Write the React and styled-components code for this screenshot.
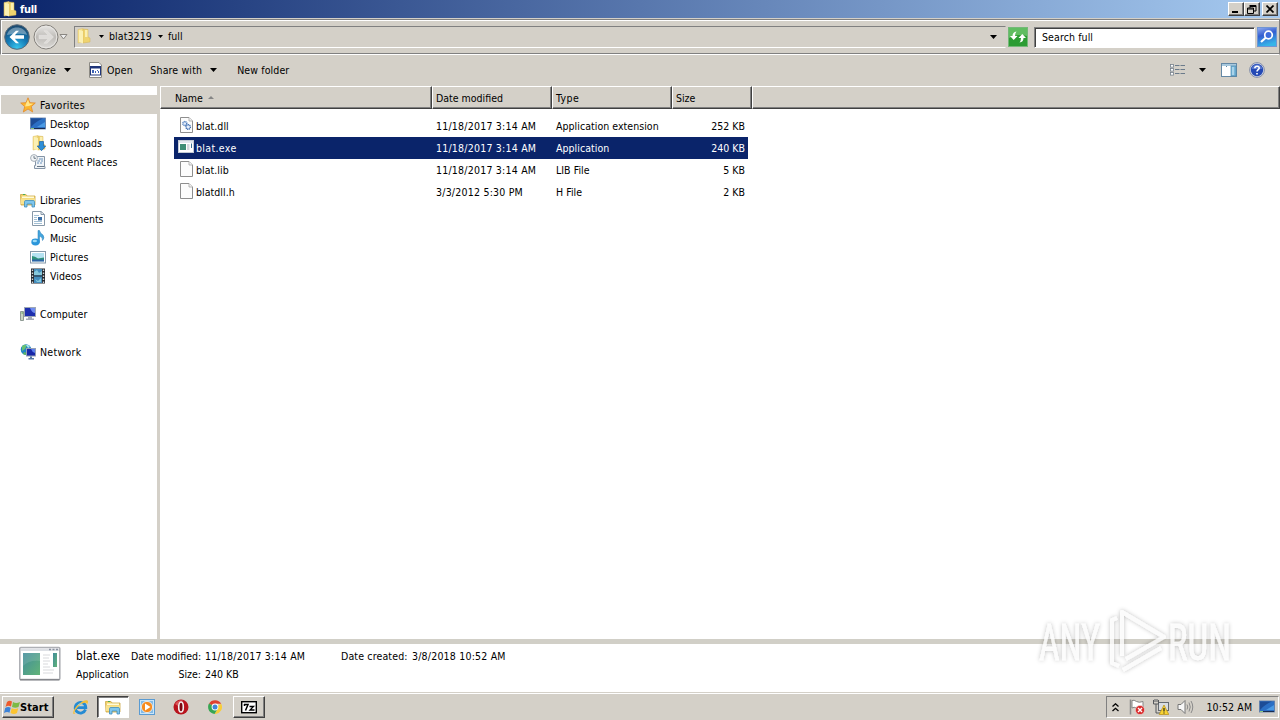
import React from "react";
import styled, { createGlobalStyle, css } from "styled-components";

const face = "#d4d0c8";
const navy = "#0a246a";

const Global = createGlobalStyle`
  * { box-sizing: border-box; }
  html, body { margin: 0; padding: 0; overflow: hidden; background: ${face}; }
  body { font-family: "DejaVu Sans Condensed", "DejaVu Sans", sans-serif; font-stretch: semi-condensed; font-size: 10.5px; color: #000; }
  svg { display: block; flex: none; }
`;

const Screen = styled.div`
  width: 1280px;
  height: 720px;
  display: flex;
  flex-direction: column;
  background: ${face};
  position: relative;
  overflow: hidden;
`;

const Label = styled.span`
  white-space: nowrap;
  line-height: 14px;
  letter-spacing: ${(p) => p.$track || 0}px;
  font-size: ${(p) => p.$size || 10.5}px;
`;

const raised = css`
  border: 1px solid;
  border-color: #fff #404040 #404040 #fff;
  box-shadow: inset -1px -1px 0 #808080;
  background: ${face};
`;

/* Title bar */
const TitleBar = styled.header`
  height: 18px;
  display: flex;
  align-items: center;
  padding: 0 2px 0 1px;
  background: linear-gradient(90deg, ${navy}, #a6caf0);
  color: #fff;
`;
const TitleText = styled.span`
  flex: 1;
  margin-left: 3px;
  padding-top: 1px;
  font-weight: bold;
  font-size: 11px;
  letter-spacing: -0.3px;
`;
const CaptionButtons = styled.div`
  display: flex;
`;
const CaptionButton = styled.div`
  ${raised}
  width: 16px;
  height: 14px;
  margin-left: ${(p) => p.$gap || 0}px;
  display: flex;
  align-items: center;
  justify-content: center;
`;

/* Address row */
const AddressRow = styled.div`
  height: 36px;
  margin-top: 1px;
  display: flex;
  align-items: center;
  padding: 0 2px 0 3px;
  border-top: 1px solid #808080;
  border-bottom: 1px solid #fff;
  border-left: 1px solid #808080;
  border-right: 1px solid #808080;
  box-shadow: inset 1px 1px 0 #fff, inset 0 -1px 0 #808080;
`;
const Sunken = styled.div`
  height: ${(p) => p.$h}px;
  border: 1px solid;
  border-color: #808080 #fff #fff #808080;
  display: flex;
  align-items: center;
`;
const AddressBox = styled(Sunken)`
  flex: 1;
  margin-left: 6px;
  padding-right: 8px;
  border-right-color: ${face};
`;
const Crumbs = styled.div`
  flex: 1;
  display: flex;
  align-items: center;
  padding-bottom: 1px;
`;
const FolderSlot = styled.div`
  margin: -2px 8px 0 0;
`;
const Crumb = styled(Label)`
  margin: 0 6px 0 5px;
  padding-bottom: 1px;
`;
const Refresh = styled.div`
  margin: 0 6px 0 2px;
`;
const SearchBox = styled(Sunken)`
  width: 221px;
  margin-right: 2px;
  background: #fff;
  padding-left: 7px;
  box-shadow: inset 1px 1px 0 #404040;
`;

/* Command bar */
const CommandBar = styled.div`
  height: 31px;
  display: flex;
  align-items: center;
  padding: 0 15px 1px 12px;
`;
const Command = styled.div`
  display: flex;
  align-items: center;
  gap: ${(p) => p.$gap || 0}px;
  margin-right: ${(p) => p.$after || 0}px;
`;
const Spacer = styled.div`
  flex: 1;
`;

/* Body */
const Body = styled.main`
  height: 553px;
  display: flex;
`;
const Nav = styled.nav`
  width: 157px;
  background: #fff;
  padding-top: 9px;
`;
const NavRow = styled.div`
  height: 19px;
  margin: 0 0 ${(p) => (p.$gapAfter ? 19 : 0)}px 1px;
  padding-left: ${(p) => (p.$child ? 29 : 19)}px;
  display: flex;
  align-items: center;
  gap: 4px;
  background: ${(p) => (p.$active ? face : "transparent")};

  ${Label} {
    padding-top: 1px;
  }
`;
const Splitter = styled.div`
  width: 3px;
  background: ${face};
`;
const Content = styled.section`
  flex: 1;
  background: #fff;
`;
const HeaderRow = styled.div`
  display: grid;
  grid-template-columns: 272px 120px 120px 80px 1fr;
  height: 23px;
`;
const HeaderCell = styled.div`
  background: ${face};
  border-top: 1px solid #fff;
  border-left: 1px solid #fff;
  border-right: 1px solid #404040;
  border-bottom: 1px solid #404040;
  box-shadow: inset -1px -1px 0 #808080;
  padding: 1px 0 0 ${(p) => (p.$first ? 14 : 3)}px;
  display: flex;
  align-items: center;
  gap: 5px;
`;
const FileList = styled.div`
  padding: 6px 0 0 14px;
`;
const FileRow = styled.div`
  width: 574px;
  height: 22px;
  display: grid;
  grid-template-columns: 262px 120px 120px 1fr;
  align-items: center;
  background: ${(p) => (p.$selected ? navy : "transparent")};
  color: ${(p) => (p.$selected ? "#fff" : "#000")};
`;
const NameCell = styled.div`
  display: flex;
  align-items: center;
  gap: 2px;
  padding-left: 4px;

  svg {
    margin-top: -2px;
  }
`;
const SizeCell = styled.div`
  text-align: right;
  padding-right: 3px;
  line-height: 14px;
`;

/* Details pane */
const Details = styled.section`
  height: 53px;
  border-top: 5px solid #d1cfc7;
  background: #fff;
  display: flex;
  padding: 1px 0 0 18px;
`;
const DetailsText = styled.div`
  display: grid;
  grid-template-columns: 55px 70px 4px 136px 71px auto;
  grid-template-rows: 18px 18px;
  align-items: center;
  align-content: start;
  margin: 2px 0 0 15px;
`;
const Right = styled(Label)`
  text-align: right;
  grid-column: ${(p) => p.$col};
`;
const At = styled(Label)`
  grid-column: ${(p) => p.$col};
`;

/* Taskbar */
const Taskbar = styled.footer`
  height: 28px;
  border-top: 1px solid #d4d0c8;
  box-shadow: inset 0 1px 0 #fff;
  display: flex;
  align-items: flex-start;
  padding: 3px 1px 0 2px;
`;
const StartButton = styled.div`
  ${raised}
  width: 52px;
  height: 22px;
  display: flex;
  align-items: center;
  padding-left: 1px;
  font-weight: bold;
  font-size: 11px;
  letter-spacing: 0.1px;

  svg {
    margin-right: -1px;
  }
`;
const TaskSlot = styled.div`
  width: ${(p) => p.$w || 34}px;
  height: 22px;
  display: flex;
  align-items: center;
  justify-content: center;
  ${(p) => p.$state === "raised" && raised}
  ${(p) =>
    p.$state === "pressed" &&
    css`
      background: #fff;
      border: 1px solid;
      border-color: #404040 #fff #fff #404040;
      box-shadow: inset 1px 1px 0 #808080;
    `}
`;
const Tray = styled.div`
  width: 173px;
  height: 22px;
  border: 1px solid;
  border-color: #808080 #fff #fff #808080;
  display: flex;
  align-items: center;
  padding-left: 5px;
`;
const TrayItem = styled.div`
  margin-right: ${(p) => p.$after || 0}px;
  display: flex;
`;
const Watermark = styled.div`
  position: absolute;
  left: 1020px;
  top: 592px;
`;

const Svg = ({ w = 16, h = w, vb, children }) => (
  <svg width={w} height={h} viewBox={vb || `0 0 ${w} ${h}`}>{children}</svg>
);

const Down = ({ small }) => (
  <Svg w={small ? 5 : 7} h={small ? 3 : 4}>
    <path d={small ? "M0 0H5L2.5 3Z" : "M0 0H7L3.5 4Z"} fill="#000" />
  </Svg>
);

const Folder = () => (
  <Svg>
    <path d="M3 1.500L8 .5V14L3 15Z" fill="#f7e28f" stroke="#dcbd62" strokeWidth=".5" />
    <path d="M8 1L13 1.500V9L15 10V14L8 15Z" fill="#efd36f" stroke="#d5b455" strokeWidth=".5" />
    <path d="M4 2L8 3V15.500L4 14Z" fill="#fbf0b4" />
    <path d="M10 2H12.500V9H10Z" fill="#fbefb0" />
  </Svg>
);

const Back = () => (
  <Svg w={26}>
    <defs>
      <radialGradient id="bk" cx=".5" cy=".95" r=".9">
        <stop offset="0" stopColor="#39c6ee" />
        <stop offset=".5" stopColor="#1479b5" />
        <stop offset="1" stopColor="#1c4a70" />
      </radialGradient>
    </defs>
    <circle cx="13" cy="13" r="12.300" fill="url(#bk)" stroke="#5c6b78" />
    <path d="M3 11C5 1 21 1 23 11C17 9 9 10 3 11Z" fill="#fff" opacity=".35" />
    <path d="M5.500 13L12 6.800H15L10.800 11.300H20V14.700H10.800L15 19.200H12Z" fill="#fff" />
  </Svg>
);
const Forward = () => (
  <Svg w={26}>
    <defs>
      <linearGradient id="fw" x1="0" y1="0" x2="0" y2="1">
        <stop offset="0" stopColor="#e9e8e6" />
        <stop offset=".5" stopColor="#bfbcb8" />
        <stop offset="1" stopColor="#dddbd8" />
      </linearGradient>
    </defs>
    <circle cx="13" cy="13" r="12" fill="url(#fw)" stroke="#85827d" />
    <circle cx="13" cy="13" r="10.800" fill="none" stroke="#e8e6e3" />
    <path d="M20.500 13L14 6.800H11L15.200 11.300H6V14.700H15.200L11 19.200H14Z" fill="#dedcd9" stroke="#eae8e6" strokeWidth=".5" />
  </Svg>
);
const RefreshIcon = () => (
  <Svg w={20}>
    <rect x=".5" y=".5" width="19" height="19" fill="#2c9c33" stroke="#74b878" />
    <path d="M1 1H19V9Q10 6 1 11Z" fill="#7dd07b" opacity=".65" />
    <path d="M2 9H4.500Q4.500 5 8.500 4.500Q7 6 7 9H9.500L5.700 13Z" fill="#fff" />
    <path d="M18 11H15.500Q15.500 15 11.500 15.500Q13 14 13 11H10.500L14.300 7Z" fill="#fff" />
  </Svg>
);
const SearchIcon = () => (
  <Svg w={20}>
    <defs>
      <linearGradient id="se" x1="0" y1="0" x2=".3" y2="1">
        <stop offset="0" stopColor="#94aff0" />
        <stop offset=".45" stopColor="#345ed1" />
        <stop offset="1" stopColor="#36b4e8" />
      </linearGradient>
    </defs>
    <rect x=".5" y=".5" width="19" height="19" fill="url(#se)" stroke="#7195d2" />
    <path d="M4 15L9 10.500" stroke="#fff" strokeWidth="2.200" />
    <circle cx="11.500" cy="8" r="3.800" fill="#3d6bdc" stroke="#fff" strokeWidth="1.700" />
  </Svg>
);
const OpenIcon = () => (
  <Svg w={15} h={16}>
    <path d="M1.500 .5H11L13.500 3V15.500H1.500Z" fill="#fff" stroke="#8c8a84" />
    <rect x="2.500" y="4.500" width="10" height="8.500" fill="#fff" stroke="#20367a" />
    <path d="M2 4H13V6.500H2Z" fill="#20367a" />
    <path d="M4 8H6V11H4ZM7 9H8V11H7ZM9 8H10V9H9ZM10 9H11V11H10Z" fill="#3d62b5" />
  </Svg>
);
const ViewIcon = () => (
  <Svg w={16} h={12}>
    {[0, 4, 8].map((y) => (
      <g key={y}>
        <rect x=".5" y={y + 0.5} width="3" height="2.600" fill="#fff" stroke="#77818c" strokeWidth=".8" />
        <path d={`M5 ${y + 1.5}H9.500M10.500 ${y + 1.5}H15`} stroke="#6b7b8b" />
      </g>
    ))}
  </Svg>
);
const PaneIcon = () => (
  <Svg w={16} h={14}>
    <rect x=".5" y=".5" width="15" height="13" fill="#fff" stroke="#6488a5" />
    <path d="M1 1H15V3H1Z" fill="#a8c9de" />
    <path d="M5.500 3V4" stroke="#6488a5" />
    <rect x="10" y="3" width="5" height="10" fill="#78b7da" stroke="#4986ac" strokeWidth=".7" />
    <path d="M12 4V12" stroke="#dcf0fa" />
  </Svg>
);
const HelpIcon = () => (
  <Svg>
    <circle cx="8" cy="8" r="7.400" fill="#d6dbe8" stroke="#858fa9" />
    <circle cx="8" cy="8" r="6.200" fill="#2449b5" />
    <path d="M2.500 7C4 1 12 1 13.500 7Z" fill="#7a96df" opacity=".6" />
    <path d="M5.800 6.200C6 3.500 10.300 3.600 10.200 6.100C10.100 7.700 8 7.700 8 9.500M8 11V12.500" fill="none" stroke="#fff" strokeWidth="1.600" />
  </Svg>
);
const Star = () => (
  <Svg>
    <path d="M8 .8L10 5.700L15.300 6L11.300 9.600L12.700 15L8 12L3.300 15L4.700 9.600L.7 6L6 5.700Z" fill="#fcb52e" stroke="#e28a2c" strokeWidth=".8" />
    <path d="M8 2.500L9.300 6.500L13.500 6.800L9 9L5 9.500L6 6.700Z" fill="#ffe68c" />
  </Svg>
);
const Desktop = () => (
  <Svg>
    <rect x=".5" y="2" width="15" height="11" fill="#2b6fc4" stroke="#5d7ba7" strokeWidth=".8" />
    <path d="M1 2.500H13Q6 5 1 11Z" fill="#1d4c96" />
    <path d="M7 11L15 6V11Z" fill="#4b9ae4" />
    <path d="M1 12.500H15" stroke="#1a2c50" />
    <path d="M1 12.500H4" stroke="#8cc97e" />
  </Svg>
);
const Downloads = () => (
  <Svg>
    <Folder />
    <path d="M9.500 6.500H13.500V11H15.700L11.500 15.700L7.200 11H9.500Z" fill="#2d8fd8" stroke="#1c62a4" strokeWidth=".7" />
  </Svg>
);
const Recent = () => (
  <Svg>
    <path d="M5.500 2.500H14.500V12.500H15V14.500H4.500V11.500H5.500Z" fill="#eef2f6" stroke="#8494a6" />
    <path d="M9 5H13M7.500 7H10M11 7H13M7 9H9M10 9H12" stroke="#6d94bd" />
    <path d="M7 12.500H14.500" stroke="#687888" />
    <circle cx="4" cy="4" r="3.400" fill="#f2f5f7" stroke="#a4adb6" />
    <path d="M4 2V4.300H6" stroke="#52616e" fill="none" strokeWidth=".8" />
  </Svg>
);
const Libraries = () => (
  <Svg>
    <path d="M.5 2.500H6L7 4H15V13H1Z" fill="#f2d46e" stroke="#cba642" strokeWidth=".8" />
    <path d="M2 4.500H14V6H2Z" fill="#fffadb" />
    <path d="M1 6.500H15V12H1Z" fill="#f8e28f" />
    <path d="M3 2H5V3H3Z" fill="#47ad55" />
    <path d="M4.500 15V9.500Q4.500 8.500 6 8.500H13Q14.500 8.500 14.500 9.500V15H12V12H7V15Z" fill="#7fc6ed" stroke="#408ebd" strokeWidth=".8" />
  </Svg>
);
const Documents = () => (
  <Svg>
    <path d="M2.500 .5H11L14.500 3.500V14.500H2.500Z" fill="#fff" stroke="#8798a8" />
    <path d="M11 .5V3.500H14.500" fill="none" stroke="#8798a8" />
    <path d="M4 4.500H9M4 6.500H7M4 8.500H7M4 10.500H12M4 12.500H12" stroke="#8aaec9" strokeWidth=".8" />
    <rect x="8" y="6" width="4" height="3.500" fill="#396da5" />
  </Svg>
);
const Music = () => (
  <Svg>
    <path d="M8 .5H9.500Q10 3.500 13 5Q15 8 12.500 10.500Q13 7 9.500 6V12.500H8Z" fill="#45a7de" stroke="#2379b5" strokeWidth=".5" />
    <ellipse cx="5.500" cy="12" rx="4.200" ry="3.400" fill="#2b96da" />
    <ellipse cx="4.800" cy="11" rx="2.200" ry="1.300" fill="#9bdaf6" />
  </Svg>
);
const Pictures = () => (
  <Svg>
    <rect x=".5" y="2.500" width="15" height="11.500" fill="#fff" stroke="#8799a9" />
    <rect x="2" y="4" width="12" height="8.500" fill="#b5e2f1" />
    <path d="M2 7Q5 7 8 9.500L14 8.500V11H2Z" fill="#2f927a" />
    <path d="M2 10.500H14V12.500H2Z" fill="#2d64a5" />
  </Svg>
);
const Videos = () => (
  <Svg>
    <rect x="1" y=".5" width="14" height="15" fill="#25292e" />
    <rect x="4" y="1" width="8" height="6.500" fill="#448dbd" />
    <rect x="4" y="8.500" width="8" height="6.500" fill="#448dbd" />
    <path d="M4 4L7 2L9 5L12 3V7H4ZM5 11L8 13L11 10V14H7Z" fill="#87c9dc" />
    <path d="M2.500 1.500V15M13.500 1.500V15" stroke="#d4d8db" strokeWidth="1.400" strokeDasharray="1.500 1.500" />
  </Svg>
);
const Computer = () => (
  <Svg>
    <path d="M.5 5.500H3.500V14.500H.5Z" fill="#c9d5c3" stroke="#8f9b94" />
    <path d="M1.500 7H3" stroke="#55a64e" />
    <rect x="4.500" y="1.500" width="11" height="9" fill="#1d2fae" stroke="#9da7b6" />
    <path d="M10 2H15V7Q12 7 10 2Z" fill="#6f8cf0" />
    <path d="M8 11H12V12.500H14V14H6V12.500H8Z" fill="#a3abb8" />
  </Svg>
);
const Network = () => (
  <Svg>
    <circle cx="6" cy="5.500" r="5.300" fill="#2285c3" />
    <path d="M2 2Q5 0 7 1L5 5L2 7Z" fill="#67c174" />
    <path d="M4 8L7 9L6 11Q4 11 3 10Z" fill="#59b466" />
    <path d="M6 1Q8 0 10 3L8 4Z" fill="#a9e3ed" />
    <rect x="6.500" y="4.500" width="9" height="7.500" fill="#1727a8" stroke="#94a0b5" />
    <path d="M11 5H15V9Q12 8 11 5Z" fill="#5c80ed" />
    <path d="M10 12.500H12V14H14V15.500H8.500V14H10Z" fill="#5478a3" />
  </Svg>
);

const Sheet = ({ children }) => (
  <Svg>
    <path d="M2.500 .5H11L14.500 4V15.500H2.500Z" fill="#fcfcfc" stroke="#8e8e8e" />
    <path d="M11 .5V4H14.500" fill="#f3f3f3" stroke="#a5a5a5" strokeWidth=".8" />
    {children}
  </Svg>
);
const Dll = () => (
  <Sheet>
    <circle cx="6.800" cy="6.500" r="2" fill="#e4edfc" stroke="#4c7cbc" strokeWidth="1.400" strokeDasharray="1 .5" />
    <circle cx="10.200" cy="10" r="2.200" fill="#e4edfc" stroke="#3969ad" strokeWidth="1.400" strokeDasharray="1 .5" />
  </Sheet>
);
const Exe = () => (
  <Svg>
    <rect x=".5" y="1.500" width="15" height="12" fill="#fff" stroke="#c3cbd5" />
    <path d="M1 2H15V4H1Z" fill="#e1e6ee" />
    <rect x="2" y="5" width="6" height="6" fill="#3e8d75" />
    <path d="M9 6H11.500M9 8H11.500M9 10H11.500" stroke="#a7afb8" />
    <path d="M13.500 4.500V9" stroke="#3b7195" />
  </Svg>
);
const ExeLarge = () => (
  <Svg w={43} h={36}>
    <defs>
      <linearGradient id="ex" x1="0" y1="0" x2="1" y2="1">
        <stop offset="0" stopColor="#418c9b" />
        <stop offset="1" stopColor="#62b478" />
      </linearGradient>
    </defs>
    <rect x="1.800" y="2.500" width="40" height="32" rx="1" fill="#fff" stroke="#aeb0b5" strokeWidth="1.600" />
    <path d="M2 34.800H41.500" stroke="#85878c" strokeWidth="1.500" />
    <path d="M3 3.500H41V6H3Z" fill="#dde0e5" />
    <path d="M31 4.500H33M34.500 4.500H36.500M38 4.500H40" stroke="#8a91a0" strokeWidth="1.500" />
    <rect x="5" y="8" width="17" height="22" fill="url(#ex)" />
    <path d="M5 21Q11 15 22 16V8H5Z" fill="#fff" opacity=".12" />
    <path d="M25 10H32M25 13H31M25 16H32M25 19H30M25 22H32M25 25H36M25 28H35" stroke="#d8d9dc" />
    <path d="M35 8H39V22H35Z" fill="url(#ex)" />
  </Svg>
);

const Flag = () => (
  <Svg w={17} h={16}>
    <path d="M3 3Q5.500 1 8 2.500L7 7.500Q4 6 1.500 8Z" fill="#ee5a2b" />
    <path d="M9 3Q12 5 16 3L14.500 8Q11.500 9.500 8 8Z" fill="#7cba45" />
    <path d="M1.200 9Q4 7.200 6.700 8.700L5.500 13.700Q3 12 0 14Z" fill="#3d83d8" />
    <path d="M7.700 9.200Q11 10.700 14.200 9.200L13 14Q10 16 6.500 14Z" fill="#fbc431" />
  </Svg>
);
const IE = () => (
  <Svg w={17}>
    <path d="M13.500 10.500A5.300 5.300 0 1 1 13.800 8.600H5" fill="none" stroke="#258bd3" strokeWidth="2.800" />
    <path d="M1.500 15C-1 11 11-.5 15.500 1.500C16.500 2.300 16 4 15 5.500C15 2 9 4 5 9C2.500 12 1.500 14 3.500 14.500Z" fill="#f2bf3c" />
    <path d="M6 6.200C7 4.500 10 4.500 11 6.500" stroke="#8bd2f3" fill="none" />
  </Svg>
);
const Player = () => (
  <Svg>
    <rect x=".5" y=".5" width="15" height="15" fill="#c9e5f9" stroke="#5a9bd2" />
    <rect x="2" y="2" width="12" height="12" fill="#83bbe7" />
    <circle cx="8" cy="8" r="5.600" fill="#f68b1e" stroke="#fff" strokeWidth=".7" />
    <path d="M6 4.500L11.500 8L6 11.500Z" fill="#fff" />
  </Svg>
);
const Opera = () => (
  <Svg>
    <circle cx="8" cy="8" r="7.500" fill="#b8141d" />
    <path d="M2 5Q5 0 11 1.500Q7 2 5 7Z" fill="#ea6d70" opacity=".7" />
    <ellipse cx="8" cy="8" rx="2.300" ry="5" fill="#7b0710" stroke="#f4f0f0" strokeWidth="1.600" />
  </Svg>
);
const Chrome = () => (
  <Svg w={14}>
    <path d="M7 7L1 3.600A7 7 0 0 1 13.200 3.800H7Z" fill="#e0402f" />
    <path d="M7 7L13.200 3.800A7 7 0 0 1 6.500 14L10 8.500Z" fill="#f8cd3a" />
    <path d="M7 7L1 3.600A7 7 0 0 0 6.500 14L9.500 9Z" fill="#37a653" />
    <circle cx="7" cy="7" r="3.400" fill="#fff" />
    <circle cx="7" cy="7" r="2.500" fill="#4285d8" />
  </Svg>
);
const SevenZip = () => (
  <Svg w={16} h={14}>
    <rect x=".7" y="1.700" width="14.600" height="11" fill="#fff" stroke="#000" strokeWidth="1.400" />
    <path d="M3 4.500H7L4.500 10.500M3.500 4V6" fill="none" stroke="#000" strokeWidth="1.500" />
    <path d="M8.500 6.500H12.500L9 10H13.500" fill="none" stroke="#000" strokeWidth="1.300" />
  </Svg>
);
const ActionFlag = () => (
  <Svg>
    <path d="M1.500 .5V15.500" stroke="#8b8b8b" strokeWidth="1.500" />
    <path d="M3 1.500Q5 .5 7.500 2.500Q10 4 14 2.500V9.500Q10 11 7.500 9Q5 7.500 3 9Z" fill="#fff" stroke="#858585" />
    <circle cx="11" cy="11" r="4.600" fill="#d92c2c" stroke="#f2d8d8" strokeWidth=".6" />
    <path d="M9 9L13 13M13 9L9 13" stroke="#fff" strokeWidth="1.400" />
  </Svg>
);
const NetTray = () => (
  <Svg>
    <rect x="5.500" y="3.500" width="10" height="8" fill="#d9dde1" stroke="#646a70" />
    <path d="M.5 1V5H5.500V1M2 0V3M4 0V3M3 5V14H7" fill="none" stroke="#55585c" />
    <path d="M11 6L15.800 15.500H6.200Z" fill="#f8d332" stroke="#b58d12" strokeWidth=".7" />
    <path d="M11 9V12.500M11 13.500V14.500" stroke="#222" strokeWidth="1.200" />
  </Svg>
);
const Speaker = () => (
  <Svg w={17} h={16}>
    <path d="M1 5.500H4L8 1.500V14.500L4 10.500H1Z" fill="#f7f7f7" stroke="#777" />
    <path d="M10 5.500Q11.500 8 10 10.500M12 3.500Q14.500 8 12 12.500M14 2Q17.500 8 14 14" fill="none" stroke="#8a8a8a" />
  </Svg>
);

const nav = [
  [Star, "Favorites", { $active: true }, 0.25],
  [Desktop, "Desktop", { $child: true }, 0.05],
  [Downloads, "Downloads", { $child: true }, 0],
  [Recent, "Recent Places", { $child: true, $gapAfter: true }, 0.15],
  [Libraries, "Libraries", {}, 0],
  [Documents, "Documents", { $child: true }, -0.05],
  [Music, "Music", { $child: true }, -0.1],
  [Pictures, "Pictures", { $child: true }, 0.15],
  [Videos, "Videos", { $child: true, $gapAfter: true }, 0.05],
  [Computer, "Computer", { $gapAfter: true }, 0.05],
  [Network, "Network", {}, 0.3],
];
const files = [
  [Dll, "blat.dll", "11/18/2017 3:14 AM", "Application extension", "252 KB"],
  [Exe, "blat.exe", "11/18/2017 3:14 AM", "Application", "240 KB"],
  [Sheet, "blat.lib", "11/18/2017 3:14 AM", "LIB File", "5 KB"],
  [Sheet, "blatdll.h", "3/3/2012 5:30 PM", "H File", "2 KB"],
];

export default function App() {
  return (
    <Screen>
      <Global />
      <TitleBar>
        <Folder />
        <TitleText>full</TitleText>
        <CaptionButtons>
          <CaptionButton><Svg w={10} h={8}><path d="M1 6H7V8H1Z" /></Svg></CaptionButton>
          <CaptionButton>
            <Svg w={10} h={9}><path d="M3 .5H9V6H7M3 1.500H9M3 0V3M.5 3V8.500H6.500V3ZM.5 4H6.500" fill="none" stroke="#000" /></Svg>
          </CaptionButton>
          <CaptionButton $gap={2}><Svg w={8} h={8}><path d="M.5 .5L7.500 7.500M7.500 .5L.5 7.500" stroke="#000" strokeWidth="1.700" /></Svg></CaptionButton>
        </CaptionButtons>
      </TitleBar>

      <AddressRow>
        <Back />
        <Command $gap={3}><span /><Forward /></Command>
        <Svg w={9} h={6}><path d="M1 .5H8L4.500 5Z" fill="#eee" stroke="#8a8782" /></Svg>
        <AddressBox $h={22}>
          <Crumbs>
            <FolderSlot><Folder /></FolderSlot>
            <Down small />
            <Crumb $track={0.1}>blat3219</Crumb>
            <Down small />
            <Crumb>full</Crumb>
          </Crumbs>
          <Down />
        </AddressBox>
        <Refresh><RefreshIcon /></Refresh>
        <SearchBox $h={21}><Label $track={0.1}>Search full</Label></SearchBox>
        <SearchIcon />
      </AddressRow>

      <CommandBar>
        <Command $gap={8} $after={17}><Label $track={0.2}>Organize</Label><Down /></Command>
        <Command $gap={4} $after={17.4}><OpenIcon /><Label $track={0.2}>Open</Label></Command>
        <Command $gap={8} $after={20}><Label $track={0.15}>Share with</Label><Down /></Command>
        <Label $track={0.12}>New folder</Label>
        <Spacer />
        <Command $after={13}><ViewIcon /></Command>
        <Command $after={15}><Down /></Command>
        <Command $after={12}><PaneIcon /></Command>
        <HelpIcon />
      </CommandBar>

      <Body>
        <Nav>
          {nav.map(([Icon, text, props, track]) => (
            <NavRow key={text} {...props}><Icon /><Label $track={track}>{text}</Label></NavRow>
          ))}
        </Nav>
        <Splitter />
        <Content>
          <HeaderRow>
            <HeaderCell $first>
              <Label>Name</Label>
              <Svg w={6} h={5}><path d="M0 3H6L3 0Z" fill="#858585" /></Svg>
            </HeaderCell>
            <HeaderCell><Label>Date modified</Label></HeaderCell>
            <HeaderCell><Label $track={0.4}>Type</Label></HeaderCell>
            <HeaderCell><Label>Size</Label></HeaderCell>
            <HeaderCell />
          </HeaderRow>
          <FileList>
            {files.map(([Icon, name, date, type, size], i) => (
              <FileRow key={name} $selected={i === 1}>
                <NameCell><Icon /><Label $track={i === 1 ? 0.35 : 0.05}>{name}</Label></NameCell>
                <Label $track={0.22}>{date}</Label>
                <Label $track={0.04}>{type}</Label>
                <SizeCell>{size}</SizeCell>
              </FileRow>
            ))}
          </FileList>
        </Content>
      </Body>

      <Details>
        <ExeLarge />
        <DetailsText>
          <At $col="1" $size={12} $track={0.1}>blat.exe</At>
          <Right $col="2">Date modified:</Right>
          <At $col="4" $track={0.22}>11/18/2017 3:14 AM</At>
          <At $col="5" $track={0.15}>Date created:</At>
          <At $col="6" $track={0.2}>3/8/2018 10:52 AM</At>
          <At $col="1">Application</At>
          <Right $col="2">Size:</Right>
          <At $col="4">240 KB</At>
        </DetailsText>
      </Details>

      <Taskbar>
        <StartButton><Flag />Start</StartButton>
        <TaskSlot $w={9} />
        <TaskSlot><IE /></TaskSlot>
        <TaskSlot $w={32} $state="pressed"><Libraries /></TaskSlot>
        <TaskSlot $w={36}><Player /></TaskSlot>
        <TaskSlot $w={32}><Opera /></TaskSlot>
        <TaskSlot $w={36}><Chrome /></TaskSlot>
        <TaskSlot $w={32} $state="raised"><SevenZip /></TaskSlot>
        <Spacer />
        <Tray>
          <TrayItem $after={10}>
            <Svg w={7} h={9}><path d="M.5 3.500L3.500 .8L6.500 3.500M.5 8L3.500 5.300L6.500 8" fill="none" stroke="#000" strokeWidth="1.300" /></Svg>
          </TrayItem>
          <TrayItem $after={8}><ActionFlag /></TrayItem>
          <TrayItem $after={8}><NetTray /></TrayItem>
          <TrayItem $after={12.5}><Speaker /></TrayItem>
          <TrayItem $after={7}><Label $track={0.1}>10:52 AM</Label></TrayItem>
          <Desktop />
        </Tray>
      </Taskbar>

      <Watermark>
        <svg width="240" height="98" viewBox="0 0 240 98">
          <defs>
            <filter id="glow" x="-10%" y="-20%" width="120%" height="140%">
              <feDropShadow dx="0" dy="0" stdDeviation="2" floodColor="#000" floodOpacity=".32" />
            </filter>
          </defs>
          <g filter="url(#glow)" fill="#fff" fillOpacity=".8" fontFamily="Roboto, sans-serif" fontSize="50" stroke="#fff" strokeOpacity=".8" strokeWidth=".3">
            <text x="19" y="68" textLength="61" lengthAdjust="spacingAndGlyphs">ANY</text>
            <text x="148" y="68" textLength="63" lengthAdjust="spacingAndGlyphs">RUN</text>
            <path d="M97 26L92 28V71L99 74M102 64V20L144 45L106 67M103 78L141 56" fill="none" strokeWidth="4" strokeLinejoin="round" />
          </g>
        </svg>
      </Watermark>
    </Screen>
  );
}
